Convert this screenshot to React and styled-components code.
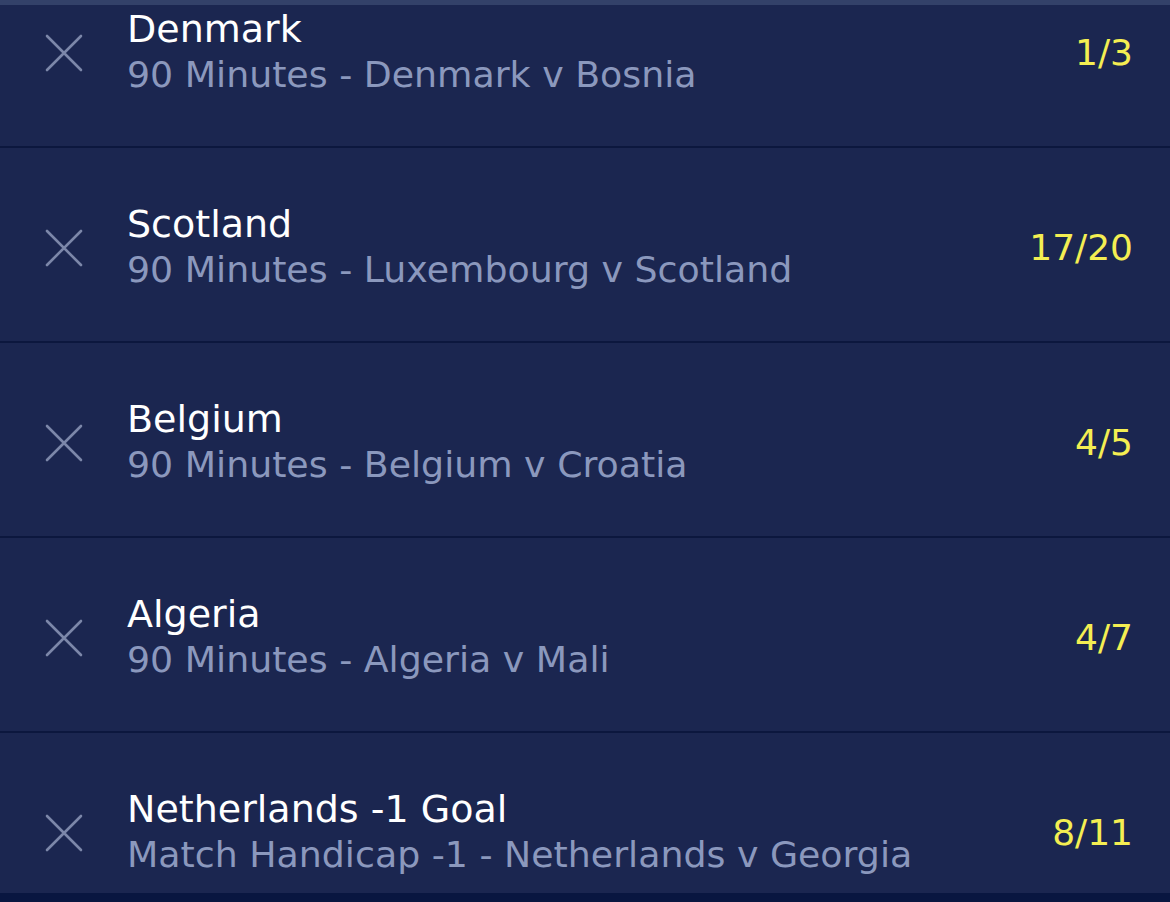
import React from 'react';
import styled, { createGlobalStyle } from 'styled-components';

const GlobalStyle = createGlobalStyle`
  html, body {
    margin: 0;
    padding: 0;
    background: #1b2650;
  }
  body {
    font-family: "DejaVu Sans", Verdana, sans-serif;
    overflow: hidden;
  }
`;

const Screen = styled.div`
  width: 1170px;
  height: 902px;
  display: flex;
  flex-direction: column;
  background: #1b2650;
  overflow: hidden;
`;

const TopEdge = styled.div`
  height: 5px;
  flex: none;
  background: #334169;
`;

const Viewport = styled.div`
  flex: 1;
  overflow: hidden;
`;

const List = styled.ul`
  list-style: none;
  margin: -52px 0 0;
  padding: 0;
`;

const Row = styled.li`
  box-sizing: border-box;
  height: 195px;
  display: flex;
  align-items: center;
  padding: 6px 37px 0 44px;
  border-bottom: 2px solid #0c173e;
  background: #1b2650;
`;

const RemoveButton = styled.button`
  flex: none;
  width: 40px;
  height: 40px;
  padding: 0;
  margin-right: 43px;
  border: none;
  background: none;
  color: #7c87a9;
  display: flex;
  align-items: center;
  justify-content: center;
  cursor: pointer;
`;

const Info = styled.div`
  flex: 1;
  display: flex;
  flex-direction: column;
  margin-top: -2px;
`;

const Selection = styled.div`
  color: #ffffff;
  font-size: 38px;
  line-height: 45px;
`;

const Market = styled.div`
  color: #8b98bd;
  font-size: 36.3px;
  line-height: 45px;
`;

const Odds = styled.div`
  color: #f4ee52;
  font-size: 36px;
`;

const BottomEdge = styled.div`
  height: 9px;
  flex: none;
  background: #091640;
`;

const CloseIcon = () => (
  <svg width="38" height="38" viewBox="0 0 38 38" fill="none">
    <path d="M2 2 L36 36 M36 2 L2 36" stroke="currentColor" strokeWidth="2.6" strokeLinecap="round" />
  </svg>
);

const bets = [
  { name: 'Denmark', market: '90 Minutes - Denmark v Bosnia', odds: '1/3' },
  { name: 'Scotland', market: '90 Minutes - Luxembourg v Scotland', odds: '17/20' },
  { name: 'Belgium', market: '90 Minutes - Belgium v Croatia', odds: '4/5' },
  { name: 'Algeria', market: '90 Minutes - Algeria v Mali', odds: '4/7' },
  { name: 'Netherlands -1 Goal', market: 'Match Handicap -1 - Netherlands v Georgia', odds: '8/11' },
];

const App = () => {
  return (
    <Screen>
      <GlobalStyle />
      <TopEdge />
      <Viewport>
        <List>
          {bets.map((bet) => (
            <Row key={bet.name}>
              <RemoveButton aria-label="Remove selection">
                <CloseIcon />
              </RemoveButton>
              <Info>
                <Selection>{bet.name}</Selection>
                <Market>{bet.market}</Market>
              </Info>
              <Odds>{bet.odds}</Odds>
            </Row>
          ))}
        </List>
      </Viewport>
      <BottomEdge />
    </Screen>
  );
};

export default App;
